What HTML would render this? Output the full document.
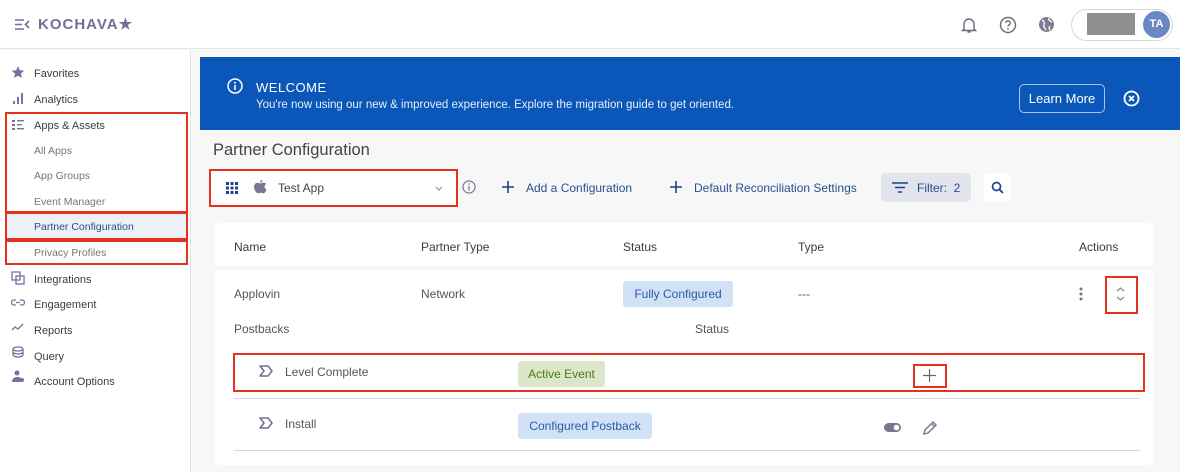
<!DOCTYPE html>
<html><head><meta charset="utf-8"><style>
*{box-sizing:border-box;margin:0;padding:0}
body{width:1180px;height:472px;overflow:hidden;font-family:"Liberation Sans",sans-serif;background:#f7f7f8;position:relative;color:#3a3a44}
.a{position:absolute}
.t{font-size:12px;color:#3b3b45;white-space:nowrap}
.red{border:2px solid #e5311f}
svg{display:block}
</style></head><body>
<div class="a" style="left:0;top:0;width:1180px;height:49px;background:#fff;border-bottom:1px solid #e3e3e6"></div>
<svg class="a" style="left:14px;top:18px" width="16" height="13" viewBox="0 0 16 13"><path d="M1 2h9M1 6.5h7M1 11h9M15 3l-3.5 3.5L15 10" stroke="#6e6e9a" stroke-width="1.6" fill="none"/></svg>
<div class="a" style="left:38px;top:15px;font-size:15px;font-weight:bold;color:#707098;letter-spacing:1px">KOCHAVA★</div>
<svg class="a" style="left:961px;top:16px" width="16" height="18" viewBox="0 0 16 18"><path d="M3 13V8a5 5 0 0110 0v5l1.5 1.5h-13zM6.5 16h3" stroke="#6a6a78" stroke-width="1.4" fill="none"/></svg>
<svg class="a" style="left:999px;top:16px" width="18" height="18" viewBox="0 0 18 18"><circle cx="9" cy="9" r="7.5" stroke="#6a6a78" stroke-width="1.4" fill="none"/><path d="M6.8 7a2.2 2.2 0 114 1.3c-.8.6-1.8 1-1.8 2.2" stroke="#6a6a78" stroke-width="1.4" fill="none"/><circle cx="9" cy="13" r=".9" fill="#6a6a78"/></svg>
<svg class="a" style="left:1038px;top:16px" width="17" height="17" viewBox="0 0 17 17"><circle cx="8.5" cy="8.5" r="7.5" fill="#7c7c92"/><path d="M4 4c2 1 3 3 2 5s1 3 2 5M11 2c-1 2 1 3 3 4M12 10c-1 1-1 3 0 4" stroke="#fff" stroke-width="1.3" fill="none"/></svg>
<div class="a" style="left:1071px;top:9px;width:102px;height:32px;border:1px solid #d8d8dc;border-radius:16px;background:#fff"></div>
<div class="a" style="left:1087px;top:13px;width:48px;height:22px;background:#8f8f8f"></div>
<div class="a" style="left:1143px;top:11px;width:27px;height:27px;border-radius:50%;background:#6b86c4;color:#fff;font-size:11px;font-weight:bold;line-height:27px;text-align:center">TA</div>

<div class="a" style="left:0;top:50px;width:191px;height:422px;background:#fff;border-right:1px solid #e3e3e6"></div>
<div class="a" style="left:6px;top:214px;width:180px;height:25px;background:#edf0f6"></div>
<div class="a t" style="left:34px;top:68px;font-size:11px">Favorites</div>
<div class="a t" style="left:34px;top:94px;font-size:11px">Analytics</div>
<div class="a t" style="left:34px;top:120px;font-size:11px">Apps &amp; Assets</div>
<div class="a t" style="left:34px;top:145px;font-size:10.5px;color:#777">All Apps</div>
<div class="a t" style="left:34px;top:170px;font-size:10.5px;color:#777">App Groups</div>
<div class="a t" style="left:34px;top:196px;font-size:10.5px;color:#777">Event Manager</div>
<div class="a t" style="left:34px;top:221px;font-size:10.5px;color:#2a4f8f">Partner Configuration</div>
<div class="a t" style="left:34px;top:247px;font-size:10.5px;color:#777">Privacy Profiles</div>
<div class="a t" style="left:34px;top:274px;font-size:11px">Integrations</div>
<div class="a t" style="left:34px;top:299px;font-size:11px">Engagement</div>
<div class="a t" style="left:34px;top:325px;font-size:11px">Reports</div>
<div class="a t" style="left:34px;top:351px;font-size:11px">Query</div>
<div class="a t" style="left:34px;top:376px;font-size:11px">Account Options</div>
<svg class="a" style="left:11px;top:65px" width="14" height="330" viewBox="0 0 14 330" fill="#7373a0">
<path d="M7 1l1.8 4.2 4.5.4-3.4 3 1 4.4L7 10.7 3.1 13l1-4.4-3.4-3 4.5-.4z"/>
<rect x="2" y="36" width="2" height="3"/><rect x="6" y="32" width="2" height="7"/><rect x="10" y="28" width="2" height="11"/>
<rect x="1" y="55" width="3" height="2"/><rect x="1" y="59" width="3" height="2"/><rect x="1" y="63" width="3" height="2"/><rect x="6" y="55" width="7" height="1.4"/><rect x="6" y="59" width="5" height="1.4"/><rect x="6" y="63" width="7" height="1.4"/>
<g stroke="#7373a0" fill="none" stroke-width="1.3"><rect x="1" y="207" width="8" height="8"/><rect x="5" y="211" width="8" height="8"/>
<path d="M5 235h-2a2.5 2.5 0 000 5h2M9 235h2a2.5 2.5 0 010 5h-2M5 237.5h4"/>
<path d="M1 265l3-3 3 2 5-5"/><ellipse cx="7" cy="284" rx="5" ry="2"/><path d="M2 284v6c0 1 2.2 2 5 2s5-1 5-2v-6M2 287c0 1 2.2 2 5 2s5-1 5-2"/></g>
<circle cx="6" cy="308" r="2.5"/><path d="M1 317c0-3 2-5 5-5s4 1 4 2v3z"/><circle cx="11" cy="315" r="2"/>
</svg>
<div class="a red" style="left:5px;top:112px;width:183px;height:101px"></div>
<div class="a red" style="left:5px;top:212px;width:183px;height:28px"></div>
<div class="a red" style="left:5px;top:240px;width:183px;height:25px"></div>

<div class="a" style="left:200px;top:57px;width:980px;height:73px;background:#0b57b9"></div>
<svg class="a" style="left:227px;top:78px" width="16" height="16" viewBox="0 0 16 16"><circle cx="8" cy="8" r="7" stroke="#fff" stroke-width="1.5" fill="none"/><path d="M8 7v5" stroke="#fff" stroke-width="1.6"/><circle cx="8" cy="4.7" r="1" fill="#fff"/></svg>
<div class="a" style="left:256px;top:80px;color:#fff;font-size:13px;letter-spacing:.5px">WELCOME</div>
<div class="a" style="left:256px;top:99px;color:#e8eefa;font-size:11.5px">You're now using our new &amp; improved experience. Explore the migration guide to get oriented.</div>
<div class="a" style="left:1019px;top:84px;width:86px;height:29px;border:1px solid #a9c2ea;border-radius:5px;color:#fff;font-size:13px;line-height:27px;text-align:center">Learn More</div>
<svg class="a" style="left:1123px;top:90px" width="17" height="17" viewBox="0 0 17 17"><circle cx="8.5" cy="8.5" r="7" stroke="#fff" stroke-width="1.8" fill="none"/><path d="M6 6l5 5M11 6l-5 5" stroke="#fff" stroke-width="1.8"/></svg>

<div class="a" style="left:213px;top:141px;font-size:16.5px;color:#444">Partner Configuration</div>
<div class="a" style="left:211px;top:171px;width:245px;height:34px;background:#fff"></div>
<svg class="a" style="left:226px;top:182px" width="12" height="12" viewBox="0 0 12 12" fill="#1f3f8a"><rect x="0" y="0" width="3" height="3"/><rect x="4.5" y="0" width="3" height="3"/><rect x="9" y="0" width="3" height="3"/><rect x="0" y="4.5" width="3" height="3"/><rect x="4.5" y="4.5" width="3" height="3"/><rect x="9" y="4.5" width="3" height="3"/><rect x="0" y="9" width="3" height="3"/><rect x="4.5" y="9" width="3" height="3"/><rect x="9" y="9" width="3" height="3"/></svg>
<svg class="a" style="left:253px;top:179px" width="14" height="16" viewBox="0 0 14 16" fill="#777790"><path d="M7 4.5c1-.2 2-.9 3.5-.9 1 0 2 .5 2.6 1.4-2.3 1.4-2 4.6.4 5.5-.5 1.6-1.6 3.8-3 3.8-1 0-1.300-.6-2.5-.6s-1.6.6-2.6.6C3.8 14.3 1 11.5 1 8c0-2.6 1.7-4.3 3.5-4.3 1 0 1.700.6 2.5.8z"/><path d="M7 3.6c0-1.4 1-2.6 2.5-2.8 0 1.5-1 2.7-2.5 2.8z"/></svg>
<div class="a t" style="left:278px;top:181px;font-size:12px;color:#444">Test App</div>
<svg class="a" style="left:435px;top:186px" width="8" height="5" viewBox="0 0 8 5"><path d="M1 1l3 3 3-3" stroke="#888" fill="none"/></svg>
<div class="a red" style="left:209px;top:169px;width:249px;height:38px"></div>
<svg class="a" style="left:462px;top:180px" width="14" height="14" viewBox="0 0 14 14"><circle cx="7" cy="7" r="6" stroke="#777790" fill="none" stroke-width="1.2"/><path d="M7 6v4.5" stroke="#777790" stroke-width="1.3"/><circle cx="7" cy="4" r=".8" fill="#777790"/></svg>
<svg class="a" style="left:502px;top:181px" width="12" height="12"><path d="M6 0v12M0 6h12" stroke="#1f3f8a" stroke-width="1.6"/></svg>
<div class="a t" style="left:526px;top:181px;color:#2a4f8f">Add a Configuration</div>
<svg class="a" style="left:670px;top:181px" width="12" height="12"><path d="M6 0v12M0 6h12" stroke="#1f3f8a" stroke-width="1.6"/></svg>
<div class="a t" style="left:694px;top:181px;color:#2a4f8f">Default Reconciliation Settings</div>
<div class="a" style="left:881px;top:173px;width:90px;height:29px;background:#e1e4eb;border-radius:5px"></div>
<svg class="a" style="left:892px;top:182px" width="16" height="11"><path d="M0 1h16M3 5.5h10M6 10h4" stroke="#1f3f8a" stroke-width="1.6"/></svg>
<div class="a t" style="left:917px;top:181px;color:#2a4f8f">Filter:&nbsp; 2</div>
<div class="a" style="left:984px;top:173px;width:27px;height:29px;background:#fff;border-radius:5px"></div>
<svg class="a" style="left:991px;top:181px" width="13" height="13"><circle cx="5.5" cy="5.5" r="4" stroke="#1f3f8a" stroke-width="1.7" fill="none"/><path d="M8.5 8.5L12 12" stroke="#1f3f8a" stroke-width="1.8"/></svg>

<div class="a" style="left:214px;top:223px;width:940px;height:43px;background:#fff;border-radius:5px"></div>
<div class="a t" style="left:234px;top:240px">Name</div>
<div class="a t" style="left:421px;top:240px">Partner Type</div>
<div class="a t" style="left:623px;top:240px">Status</div>
<div class="a t" style="left:798px;top:240px">Type</div>
<div class="a t" style="left:1079px;top:240px">Actions</div>

<div class="a" style="left:214px;top:270px;width:940px;height:195px;background:#fff;border-radius:5px"></div>
<div class="a t" style="left:234px;top:287px;color:#555">Applovin</div>
<div class="a t" style="left:421px;top:287px;color:#555">Network</div>
<div class="a" style="left:623px;top:281px;width:110px;height:26px;background:#d2e2f6;border-radius:3px;color:#2a5aa8;font-size:12px;line-height:26px;text-align:center">Fully Configured</div>
<div class="a t" style="left:798px;top:287px;color:#555">---</div>
<svg class="a" style="left:1079px;top:287px" width="4" height="14" fill="#777"><circle cx="2" cy="2" r="1.5"/><circle cx="2" cy="7" r="1.5"/><circle cx="2" cy="12" r="1.5"/></svg>
<svg class="a" style="left:1116px;top:287px" width="9" height="14"><path d="M1 4l3.5-3 3.5 3M1 10l3.5 3 3.5-3" stroke="#888" fill="none" stroke-width="1.2"/></svg>
<div class="a red" style="left:1105px;top:276px;width:33px;height:38px"></div>
<div class="a t" style="left:234px;top:322px;color:#555">Postbacks</div>
<div class="a t" style="left:695px;top:322px;color:#555">Status</div>

<svg class="a" style="left:259px;top:365px" width="14" height="12"><path d="M1 1h8l4 5-4 5H1l4-5z" stroke="#6e6e9a" stroke-width="1.5" fill="none" stroke-linejoin="round"/></svg>
<div class="a t" style="left:285px;top:365px;color:#555">Level Complete</div>
<div class="a" style="left:518px;top:361px;width:87px;height:26px;background:#dbe7c8;border-radius:3px;color:#4a7a1c;font-size:12px;line-height:26px;text-align:center">Active Event</div>
<svg class="a" style="left:923px;top:369px" width="13" height="13"><path d="M6.5 0v13M0 6.5h13" stroke="#666" stroke-width="1.2"/></svg>
<div class="a red" style="left:233px;top:353px;width:912px;height:39px"></div>
<div class="a red" style="left:913px;top:364px;width:34px;height:24px"></div>
<div class="a" style="left:234px;top:398px;width:906px;height:1px;background:#d8d8dc"></div>
<svg class="a" style="left:259px;top:417px" width="14" height="12"><path d="M1 1h8l4 5-4 5H1l4-5z" stroke="#6e6e9a" stroke-width="1.5" fill="none" stroke-linejoin="round"/></svg>
<div class="a t" style="left:285px;top:417px;color:#555">Install</div>
<div class="a" style="left:518px;top:413px;width:134px;height:26px;background:#d2e2f6;border-radius:3px;color:#2a5aa8;font-size:12px;line-height:26px;text-align:center">Configured Postback</div>
<svg class="a" style="left:884px;top:423px" width="17" height="9"><rect x="0" y="0" width="17" height="9" rx="4.5" fill="#777790"/><circle cx="12.5" cy="4.5" r="2.8" fill="#fff"/></svg>
<svg class="a" style="left:922px;top:420px" width="16" height="16"><path d="M2 14l1-4 8-8 3 3-8 8zM9.5 3.5l3 3" stroke="#777790" stroke-width="1.4" fill="none"/></svg>
<div class="a" style="left:234px;top:450px;width:906px;height:1px;background:#d8d8dc"></div>
</body></html>
